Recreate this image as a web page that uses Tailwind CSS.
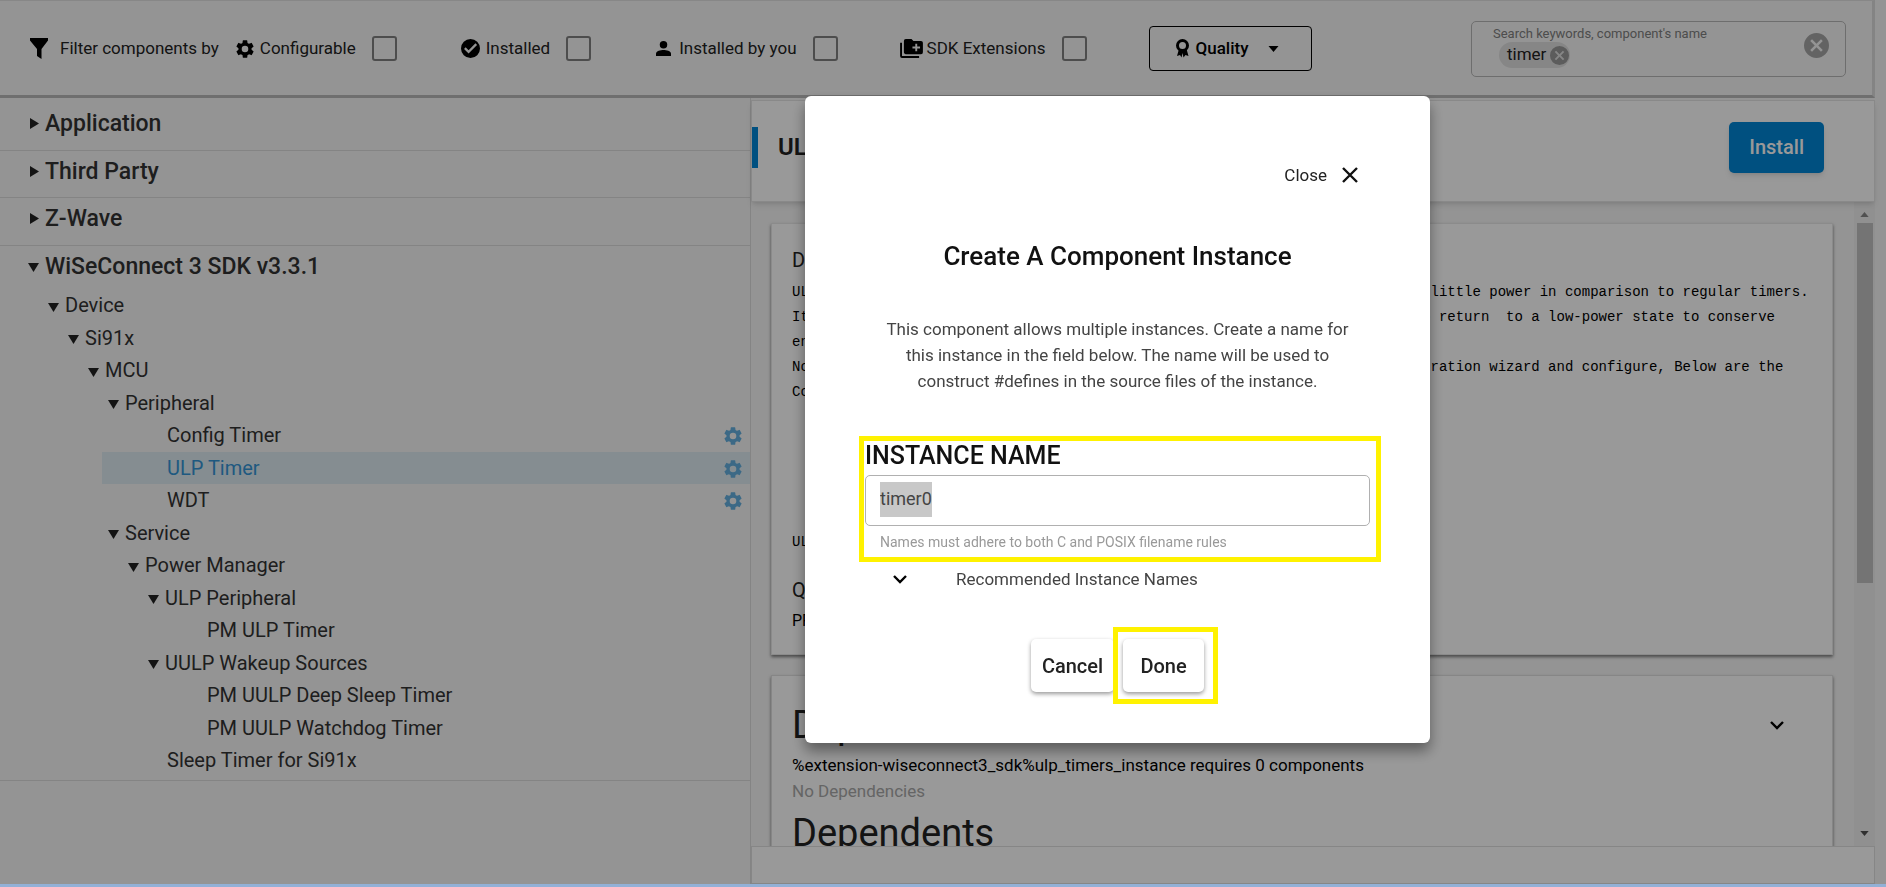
<!DOCTYPE html>
<html lang="en">
<head>
<meta charset="utf-8">
<title>Software Components</title>
<script src="https://cdn.jsdelivr.net/npm/@tailwindcss/browser@4"></script>
</head>
<body class="h-screen overflow-hidden bg-[#f7f7f7] font-['Roboto',sans-serif] text-[#333]">
<svg class="hidden" aria-hidden="true">
  <symbol id="gear" viewBox="0 0 24 24"><path d="M19.14 12.94c.04-.3.06-.61.06-.94s-.02-.64-.07-.94l2.03-1.58a.49.49 0 0 0 .12-.61l-1.92-3.32a.49.49 0 0 0-.59-.22l-2.39.96a7 7 0 0 0-1.62-.94L14.4 2.81a.48.48 0 0 0-.48-.41h-3.84a.47.47 0 0 0-.47.41l-.36 2.54a7.4 7.4 0 0 0-1.62.94l-2.39-.96a.48.48 0 0 0-.59.22L2.74 8.87a.47.47 0 0 0 .12.61l2.03 1.58a6 6 0 0 0 0 1.88l-2.03 1.58a.49.49 0 0 0-.12.61l1.92 3.32c.12.22.37.29.59.22l2.39-.96c.5.38 1.03.7 1.62.94l.36 2.54c.05.24.24.41.48.41h3.84c.24 0 .44-.17.47-.41l.36-2.54a7.400 7.400 0 0 0 1.62-.94l2.39.96c.22.08.47 0 .59-.22l1.92-3.32a.47.47 0 0 0-.12-.61zM12 15.600a3.600 3.600 0 1 1 0-7.200 3.600 3.600 0 0 1 0 7.200z"/></symbol>
  <symbol id="cancel" viewBox="2 2 20 20"><path d="M12 2a10 10 0 1 0 0 20 10 10 0 0 0 0-20zm5 13.590L15.590 17 12 13.410 8.410 17 7 15.590 10.590 12 7 8.410 8.410 7 12 10.590 15.590 7 17 8.410 13.410 12z"/></symbol>
  <symbol id="down" viewBox="0 0 11 9"><path d="M0 0h11L5.500 9z"/></symbol>
  <symbol id="right" viewBox="0 0 9 11"><path d="M0 0v11l9-5.500z"/></symbol>
  <symbol id="chevron" viewBox="0 0 16 10"><path d="M2 2l6 6 6-6" fill="none" stroke="currentColor" stroke-width="2.400"/></symbol>
</svg>

<div class="flex h-full flex-col">
  <header class="flex h-[98px] shrink-0 items-center mr-[11px] border-t border-r-3 border-b-3 border-t-[#e2e2e2] border-r-[#dcdcdc] border-b-[#b9b9b9] pt-px pl-[30px] pr-[26px] text-[17px] text-[#222]">
    <svg class="mr-3 h-[21px] w-[18px] fill-black" viewBox="0 0 18 21"><path d="M0 0h18v2.500L11.500 11v10L7 18V11L0 2.500z"/></svg>
    <span>Filter components by</span>
    <label class="ml-[15px] flex items-center"><svg class="mr-1 size-[22px] fill-black"><use href="#gear"/></svg>Configurable
      <input type="checkbox" class="ml-4 size-[25px] appearance-none rounded-[3px] border-2 border-[#808080]"></label>
    <label class="ml-16 flex items-center"><svg class="mr-1.5 size-[19px] fill-black" viewBox="0 0 20 20"><path fill-rule="evenodd" d="M10 0a10 10 0 1 0 0 20 10 10 0 0 0 0-20zM8 15.200L3.200 10.400l1.700-1.700L8 11.800l7.200-7.200 1.700 1.700z"/></svg>Installed
      <input type="checkbox" class="ml-4 size-[25px] appearance-none rounded-[3px] border-2 border-[#808080]"></label>
    <label class="ml-[65px] flex items-center"><svg class="mr-2 size-[15px] fill-black" viewBox="0 0 16 16"><circle cx="8" cy="4" r="4"/><path d="M0 16v-2.500C0 10.500 5 9.500 8 9.500s8 1 8 4V16z"/></svg>Installed by you
      <input type="checkbox" class="ml-4 size-[25px] appearance-none rounded-[3px] border-2 border-[#808080]"></label>
    <label class="ml-[62px] flex items-center"><svg class="mr-1 h-[19px] w-[23px] fill-black" viewBox="0 0 24 20"><path d="M2 4H0v14a2 2 0 0 0 2 2h18v-2H2z"/><path fill-rule="evenodd" d="M22 2h-8l-2-2H6a2 2 0 0 0-2 2v12c0 1.100.9 2 2 2h16a2 2 0 0 0 2-2V4a2 2 0 0 0-2-2zm-1 8h-3v3h-2v-3h-3V8h3V5h2v3h3z"/></svg>SDK Extensions
      <input type="checkbox" class="ml-4 size-[25px] appearance-none rounded-[3px] border-2 border-[#808080]"></label>
    <button class="ml-[62px] flex h-[45px] items-center rounded border border-black pl-[25px] pr-8 font-medium text-black"><svg class="mr-1.5 h-[19px] w-[15px]" viewBox="0 0 15 19"><path d="M4 10L2 17l3-1 1.500 2.500L7.500 14l1 4.500L10.500 16l3 1L11.500 10z"/><circle cx="7.500" cy="6.500" r="5" fill="none" stroke="#000" stroke-width="3"/></svg>Quality
      <svg class="ml-5 h-1.5 w-[11px]" viewBox="0 0 10 6"><path d="M0 0h10L5 6z"/></svg></button>
    <div class="ml-auto flex h-[56px] w-[375px] items-center justify-between rounded-[5px] border border-[#b8b8b8] pl-[21px] pr-4">
      <div class="pb-[3px]">
        <label for="search" class="block text-[13px] leading-4 text-[#808080]">Search keywords, component's name</label>
        <div class="flex h-[26px] items-center">
          <span class="ml-1.5 flex h-[26px] items-center gap-1 rounded-full bg-[#e0e0e0] pl-2 pr-px text-[#222]">timer <button aria-label="Remove timer"><svg class="block size-[19px] fill-[#999]"><use href="#cancel"/></svg></button></span>
          <input id="search" class="w-24 bg-transparent outline-none">
        </div>
      </div>
      <button aria-label="Clear search" class="pb-1.5"><svg class="block size-[25px] fill-[#a6a6a6]"><use href="#cancel"/></svg></button>
    </div>
  </header>

  <div class="flex min-h-0 flex-1">
    <nav class="w-[751px] shrink-0 border-r border-[#dcdcdc]">
      <h2 class="flex h-[53px] items-center gap-1.5 border-b border-[#ddd] pb-0.5 pl-[30px] text-[23px] font-medium leading-[33px]"><svg class="h-[11px] w-[9px] fill-[#222]"><use href="#right"/></svg>Application</h2>
      <h2 class="flex h-[47px] items-start gap-1.5 border-b border-[#ddd] pl-[30px] pt-1 text-[23px] font-medium leading-[33px]"><svg class="mt-[11px] h-[11px] w-[9px] fill-[#222]"><use href="#right"/></svg>Third Party</h2>
      <h2 class="flex h-[48px] items-start gap-1.5 border-b border-[#ddd] pl-[30px] pt-1 text-[23px] font-medium leading-[33px]"><svg class="mt-[11px] h-[11px] w-[9px] fill-[#222]"><use href="#right"/></svg>Z-Wave</h2>
      <section class="border-b border-[#ddd] pb-[3px]">
        <h2 class="flex items-start gap-1.5 pb-[6px] pl-7 pt-1 text-[23px] font-medium leading-[33px]"><svg class="mt-[13px] h-[9px] w-[11px] fill-[#222]"><use href="#down"/></svg>WiSeConnect 3 SDK v3.3.1</h2>
        <ul class="text-[20px] leading-relaxed">
          <li class="flex items-center gap-1.5 pl-12"><svg class="mt-1 h-[9px] w-[11px] fill-[#222]"><use href="#down"/></svg>Device</li>
          <li class="flex items-center gap-1.5 pl-[68px]"><svg class="mt-1 h-[9px] w-[11px] fill-[#222]"><use href="#down"/></svg>Si91x</li>
          <li class="flex items-center gap-1.5 pl-[88px]"><svg class="mt-1 h-[9px] w-[11px] fill-[#222]"><use href="#down"/></svg>MCU</li>
          <li class="flex items-center gap-1.5 pl-[108px]"><svg class="mt-1 h-[9px] w-[11px] fill-[#222]"><use href="#down"/></svg>Peripheral</li>
          <li class="ml-[102px] flex items-center justify-between pl-[65px] pr-1.5">Config Timer<svg class="mt-0.5 size-[22px] fill-[#64b0df]"><use href="#gear"/></svg></li>
          <li class="ml-[102px] flex items-center justify-between bg-[#deebf2] pl-[65px] pr-1.5 text-[#3595d6]">ULP Timer<svg class="mt-0.5 size-[22px] fill-[#64b0df]"><use href="#gear"/></svg></li>
          <li class="ml-[102px] flex items-center justify-between pl-[65px] pr-1.5">WDT<svg class="mt-0.5 size-[22px] fill-[#64b0df]"><use href="#gear"/></svg></li>
          <li class="flex items-center gap-1.5 pl-[108px]"><svg class="mt-1 h-[9px] w-[11px] fill-[#222]"><use href="#down"/></svg>Service</li>
          <li class="flex items-center gap-1.5 pl-[128px]"><svg class="mt-1 h-[9px] w-[11px] fill-[#222]"><use href="#down"/></svg>Power Manager</li>
          <li class="flex items-center gap-1.5 pl-[148px]"><svg class="mt-1 h-[9px] w-[11px] fill-[#222]"><use href="#down"/></svg>ULP Peripheral</li>
          <li class="pl-[207px]">PM ULP Timer</li>
          <li class="flex items-center gap-1.5 pl-[148px]"><svg class="mt-1 h-[9px] w-[11px] fill-[#222]"><use href="#down"/></svg>UULP Wakeup Sources</li>
          <li class="pl-[207px]">PM UULP Deep Sleep Timer</li>
          <li class="pl-[207px]">PM UULP Watchdog Timer</li>
          <li class="pl-[167px]">Sleep Timer for Si91x</li>
        </ul>
      </section>
    </nav>

    <main class="mr-[11px] mt-[2px] flex min-w-0 flex-1 flex-col">
      <div class="z-10 flex h-[102px] shrink-0 items-center border border-[#e4e4e4] bg-white pb-2 pr-[50px] shadow-md">
        <span class="h-[41px] w-[6px] bg-[#0085d5]"></span>
        <h1 class="ml-5 text-[24px] font-semibold text-[#222]">ULP Timer</h1>
        <button class="ml-auto h-[51px] rounded-[5px] bg-[#0085d5] px-5 text-[20px] font-medium text-white shadow-md">Install</button>
      </div>
      <div class="flex min-h-0 flex-1">
        <div class="min-w-0 flex-1 overflow-hidden pl-5 pr-[21px] pt-[21px]">
          <section class="h-[432px] border border-[#e8e8e8] bg-white pl-5 pt-[21px] text-[#222] shadow-[0_2px_3px_#00000080]">
            <h2 class="text-[20px] leading-[30px]">Description</h2>
            <pre class="mt-[5px] font-['Liberation_Mono',monospace] text-[14px] leading-[25px] text-black">ULP Timers are used in low-power systems and are designed to use relatively little power in comparison to regular timers.
It can be used to wake the device periodically, run a short task and then to return  to a low-power state to conserve
energy.
Note: To use ULP Timer install an instance, then open the associated configuration wizard and configure, Below are the
Configurations:





ULP Timer</pre>
            <h2 class="mt-[20px] text-[20px] leading-[30px]">Quality</h2>
            <p class="mt-[5px] text-[16px] leading-[22px] text-black">PRODUCTION</p>
          </section>
          <section class="mt-[20px] border border-[#e0e0e0] bg-white pb-5 pl-5 pr-[47px] pt-6 shadow-[0_2px_3px_#00000080]">
            <div class="flex items-center justify-between text-[#222]">
              <h2 class="text-[38px] leading-[50px]">Dependencies</h2>
              <button aria-label="Expand" class="text-black"><svg class="block h-[10px] w-[16px]"><use href="#chevron"/></svg></button>
            </div>
            <p class="mt-0.5 text-[17px] leading-[26px] text-black">%extension-wiseconnect3_sdk%ulp_timers_instance requires 0 components</p>
            <p class="text-[17px] leading-[26px] text-[#a8a8a8]">No Dependencies</p>
            <h2 class="mt-1 text-[38px] leading-[50px] text-[#222]">Dependents</h2>
          </section>
        </div>
        <div class="flex w-[21px] flex-col items-center bg-[#f1f1f1] pb-2.5 pt-2.5">
          <svg class="h-[5px] w-[9px] fill-[#888]" viewBox="0 0 10 6"><path d="M0 6h10L5 0z"/></svg>
          <span class="mt-1.5 h-[360px] w-4 bg-[#c1c1c1]"></span>
          <svg class="mt-auto h-[5px] w-[9px] fill-[#505050]" viewBox="0 0 10 6"><path d="M0 0h10L5 6z"/></svg>
        </div>
      </div>
      <footer class="z-10 h-[38px] shrink-0 border border-[#e0e0e0] bg-white"></footer>
    </main>
  </div>
  <div class="z-30 h-[3px] shrink-0 bg-[#92b0d6]"></div>
</div>

<div class="fixed inset-0 bottom-[3px] z-20 flex items-start justify-center bg-black/40 pl-[349px] pt-24">
  <div role="dialog" aria-labelledby="dlg-title" class="flex w-[625px] flex-col rounded-md bg-white pb-[51px] pl-[60px] pr-[60px] pt-[66px] text-[#444] shadow-[0_8px_14px_#00000066]">
    <button class="mr-[11px] flex items-center gap-3.5 self-end text-[17px] leading-[26px] text-[#222]">Close
      <svg class="size-[18px]" viewBox="0 0 18 18"><path d="M2 2l14 14M16 2L2 16" stroke="#111" stroke-width="2.400"/></svg></button>
    <h2 id="dlg-title" class="mt-[52px] text-center text-[26px] font-medium leading-[32px] text-[#111]">Create A Component Instance</h2>
    <p class="mt-[44px] px-1 text-center text-[17px] leading-[26px]">This component allows multiple instances. Create a name for<br>this instance in the field below. The name will be used to<br>construct #defines in the source files of the instance.</p>
    <div class="relative mt-[47px] w-[505px]">
      <label for="instance" class="block text-[25px] font-medium leading-[30px] text-[#111]">INSTANCE NAME</label>
      <input id="instance" value="timer0" class="mt-1 block h-[51px] w-full rounded-[5px] border border-[#b0b0b0] bg-[linear-gradient(#c8c8c8,#c8c8c8)] bg-[length:52px_35px] bg-[position:14px_6px] bg-no-repeat px-[14px] pb-1 text-[18px] text-[#444] outline-none selection:bg-[#c8c8c8] selection:text-[#444]">
      <p class="mt-1.5 pl-[15px] text-[14px] leading-[20px] text-[#999]">Names must adhere to both C and POSIX filename rules</p>
      <span class="pointer-events-none absolute -bottom-[10px] -left-[6px] -right-[11px] -top-[5px] border-5 border-[#fff200]"></span>
    </div>
    <button class="mt-[14px] flex items-center gap-12 pl-[27px] text-left text-[17px] leading-[26px]"><svg class="block h-[10px] w-[16px] text-black"><use href="#chevron"/></svg>Recommended Instance Names</button>
    <div class="mt-[47px] flex justify-center gap-[9px]">
      <button class="h-[53px] w-[83px] rounded-[5px] bg-white text-[20px] font-medium text-[#222] shadow-[0_2px_4px_#00000066]">Cancel</button>
      <span class="relative">
        <button class="h-[53px] w-[81px] rounded-[5px] bg-white text-[20px] font-medium text-[#222] shadow-[0_2px_4px_#00000066]">Done</button>
        <span class="pointer-events-none absolute -bottom-3 -left-2.5 -right-3.5 -top-3 border-5 border-[#fff200]"></span>
      </span>
    </div>
  </div>
</div>
<script>
  const field = document.getElementById('instance');
  field.focus();
  field.select();
</script>
</body>
</html>
